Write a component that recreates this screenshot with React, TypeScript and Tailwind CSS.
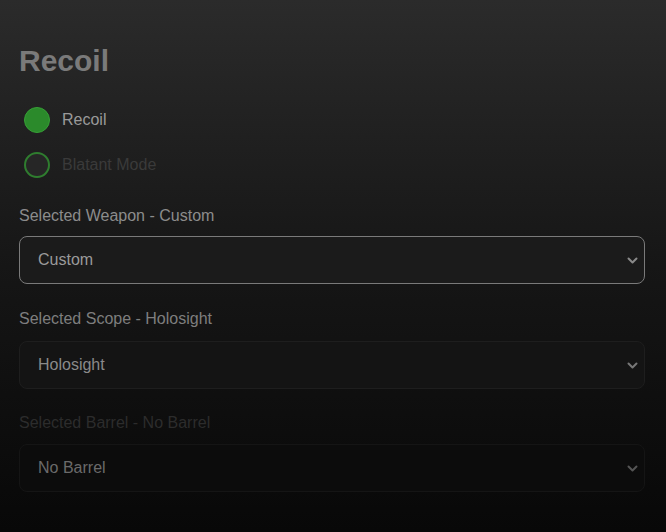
import React from 'react';

const Chevron = ({ className }: { className: string }) => (
  <svg className={className} width="11" height="7" viewBox="0 0 11 7" fill="none" stroke="currentColor">
    <path d="M1.5 1.5l4 4 4-4" strokeWidth={2} strokeLinecap="round" strokeLinejoin="round" />
  </svg>
);

const Select = ({ value, active, dim }: { value: string; active?: boolean; dim?: boolean }) => (
  <div
    className={`flex items-center justify-between h-[48px] rounded-lg pl-[18px] pr-[6px] ${
      active ? 'border border-[#7a7a7a] bg-[#1b1b1b]' : dim ? 'border border-[#151515] bg-[#0c0c0c]' : 'border border-[#1e1e1e] bg-[#141414]'
    }`}
  >
    <span className={`text-[16px] ${active ? 'text-[#9a9a9a]' : dim ? 'text-[#6a6a6a]' : 'text-[#8a8a8a]'}`}>{value}</span>
    <Chevron className={active ? 'text-[#8a8a8a]' : dim ? 'text-[#555]' : 'text-[#777]'} />
  </div>
);

const App: React.FC = () => {
  return (
    <div
      className="w-full h-[532px] overflow-hidden bg-gradient-to-b from-[#2b2b2b] via-[#161616] to-[#080808] pl-[19px] pr-[21px] pt-[44px]"
      style={{ fontFamily: '"Liberation Sans", Arial, sans-serif' }}
    >
      <h1 className="text-[30px] leading-[34px] font-bold text-[#7a7a7a]">Recoil</h1>

      <div className="mt-[27px] flex flex-col gap-[15px] pl-[5px]">
        <div className="flex items-center h-[30px] gap-[12px]">
          <span className="w-[26px] h-[26px] rounded-full bg-[#2b8a2b] border border-[#36a036]" />
          <span className="text-[16px] text-[#9a9a9a]">Recoil</span>
        </div>
        <div className="flex items-center h-[30px] gap-[12px]">
          <span className="w-[26px] h-[26px] rounded-full bg-[#262626] border-2 border-[#2f7d2f]" />
          <span className="text-[16px] text-[#3a3a3a]">Blatant Mode</span>
        </div>
      </div>

      <div className="mt-[24px]">
        <div className="text-[16px] leading-[24px] text-[#8c8c8c]">Selected Weapon - Custom</div>
        <div className="mt-[8px]">
          <Select value="Custom" active />
        </div>
      </div>

      <div className="mt-[23px]">
        <div className="text-[16px] leading-[24px] text-[#7e7e7e]">Selected Scope - Holosight</div>
        <div className="mt-[10px]">
          <Select value="Holosight" />
        </div>
      </div>

      <div className="mt-[22px]">
        <div className="text-[16px] leading-[24px] text-[#2c2c2c]">Selected Barrel - No Barrel</div>
        <div className="mt-[9px]">
          <Select value="No Barrel" dim />
        </div>
      </div>
    </div>
  );
};

export default App;
